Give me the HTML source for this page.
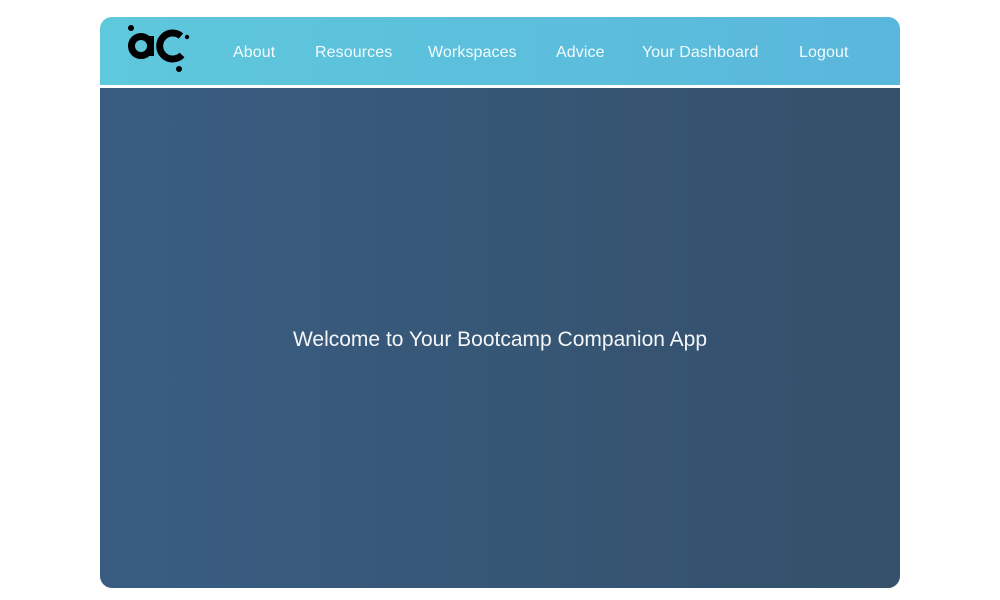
<!DOCTYPE html>
<html><head><meta charset="utf-8"><style>
html,body{margin:0;padding:0;background:#fff;width:1000px;height:600px;overflow:hidden;font-family:"Liberation Sans",sans-serif}
.card{position:absolute;left:100px;top:17px;width:800px;height:571px;border-radius:12px;overflow:hidden;background:#fff}
.hdr{position:absolute;left:0;top:0;width:800px;height:68px;background:linear-gradient(90deg,#5ec8dc,#5ab7dc)}
.main{position:absolute;left:0;top:71px;width:800px;height:500px;background:linear-gradient(90deg,#395d82,#34506a)}
.nav a{position:absolute;top:27px;color:#f2fbfd;font-size:16px;text-decoration:none;letter-spacing:0.1px}
h1{position:absolute;left:0;width:800px;top:240px;margin:0;text-align:center;color:#f4f6f8;font-weight:normal;font-size:21px}
</style></head><body>
<div class="card">
<div class="hdr">
<svg style="position:absolute;left:25px;top:6px" width="66" height="54" viewBox="0 0 66 54">
<circle cx="6" cy="5" r="3" fill="#000"/>
<circle cx="16" cy="23" r="9.5" fill="none" stroke="#000" stroke-width="7"/>
<rect x="23" y="13" width="6" height="20" fill="#000"/>
<path d="M56 13 A13 13 0 1 0 57 32" fill="none" stroke="#000" stroke-width="7"/>
<circle cx="62" cy="14" r="2.2" fill="#000"/>
<circle cx="54" cy="46" r="3" fill="#000"/>
</svg>
<div class="nav">
<a style="left:133px">About</a>
<a style="left:215px">Resources</a>
<a style="left:328px">Workspaces</a>
<a style="left:456px">Advice</a>
<a style="left:542px">Your Dashboard</a>
<a style="left:699px">Logout</a>
</div>
</div>
<div class="main"><h1>Welcome to Your Bootcamp Companion App</h1></div>
</div>
</body></html>
